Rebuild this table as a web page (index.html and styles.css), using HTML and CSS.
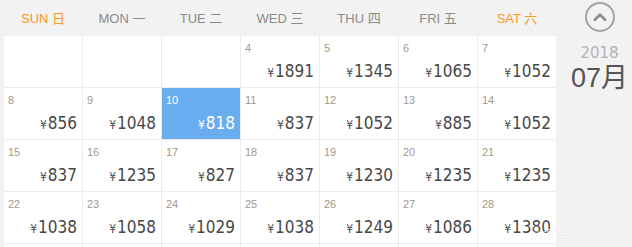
FILE: index.html
```html
<!DOCTYPE html>
<html lang="zh-CN">
<head>
<meta charset="utf-8">
<title>价格日历</title>
<link rel="stylesheet" href="styles.css">
</head>
<body>
<div class="page">
  <div class="calendar">
    <div class="weekdays">
      <div class="wd weekend">SUN 日</div>
      <div class="wd">MON 一</div>
      <div class="wd">TUE 二</div>
      <div class="wd">WED 三</div>
      <div class="wd">THU 四</div>
      <div class="wd">FRI 五</div>
      <div class="wd weekend">SAT 六</div>
    </div>
    <div class="days">
      <div class="day"></div>
      <div class="day"></div>
      <div class="day"></div>
      <div class="day"><span class="num">4</span><span class="price"><i>¥</i>1891</span></div>
      <div class="day"><span class="num">5</span><span class="price"><i>¥</i>1345</span></div>
      <div class="day"><span class="num">6</span><span class="price"><i>¥</i>1065</span></div>
      <div class="day"><span class="num">7</span><span class="price"><i>¥</i>1052</span></div>

      <div class="day"><span class="num">8</span><span class="price"><i>¥</i>856</span></div>
      <div class="day"><span class="num">9</span><span class="price"><i>¥</i>1048</span></div>
      <div class="day selected"><span class="num">10</span><span class="price"><i>¥</i>818</span></div>
      <div class="day"><span class="num">11</span><span class="price"><i>¥</i>837</span></div>
      <div class="day"><span class="num">12</span><span class="price"><i>¥</i>1052</span></div>
      <div class="day"><span class="num">13</span><span class="price"><i>¥</i>885</span></div>
      <div class="day"><span class="num">14</span><span class="price"><i>¥</i>1052</span></div>

      <div class="day"><span class="num">15</span><span class="price"><i>¥</i>837</span></div>
      <div class="day"><span class="num">16</span><span class="price"><i>¥</i>1235</span></div>
      <div class="day"><span class="num">17</span><span class="price"><i>¥</i>827</span></div>
      <div class="day"><span class="num">18</span><span class="price"><i>¥</i>837</span></div>
      <div class="day"><span class="num">19</span><span class="price"><i>¥</i>1230</span></div>
      <div class="day"><span class="num">20</span><span class="price"><i>¥</i>1235</span></div>
      <div class="day"><span class="num">21</span><span class="price"><i>¥</i>1235</span></div>

      <div class="day"><span class="num">22</span><span class="price"><i>¥</i>1038</span></div>
      <div class="day"><span class="num">23</span><span class="price"><i>¥</i>1058</span></div>
      <div class="day"><span class="num">24</span><span class="price"><i>¥</i>1029</span></div>
      <div class="day"><span class="num">25</span><span class="price"><i>¥</i>1038</span></div>
      <div class="day"><span class="num">26</span><span class="price"><i>¥</i>1249</span></div>
      <div class="day"><span class="num">27</span><span class="price"><i>¥</i>1086</span></div>
      <div class="day"><span class="num">28</span><span class="price"><i>¥</i>1380</span></div>

      <div class="day"></div>
      <div class="day"></div>
      <div class="day"></div>
      <div class="day"></div>
      <div class="day"></div>
      <div class="day"></div>
      <div class="day"></div>
    </div>
  </div>
  <div class="side">
    <svg class="up" width="30" height="30" viewBox="0 0 30 30" aria-label="上一月">
      <circle cx="15" cy="15" r="14" fill="none" stroke="#a3a3a3" stroke-width="2"/>
      <polyline points="9.8,17.8 15,12.8 20.2,17.8" fill="none" stroke="#8c8c8c" stroke-width="2.6" stroke-linecap="round" stroke-linejoin="round"/>
    </svg>
    <div class="year">2018</div>
    <div class="month">07月</div>
  </div>
</div>
<div class="watermark">头条号 / 染柳烟浓</div>
</body>
</html>
```
FILE: styles.css
```css
html, body {
  margin: 0;
  padding: 0;
  height: 247px;
  overflow: hidden;
  background: #f2f2f2;
}

body {
  position: relative;
  font-family: "Liberation Sans", "Noto Sans CJK SC", sans-serif;
}

.page {
  display: flex;
  padding-left: 4px;
}

.calendar {
  width: 552px;
  flex: none;
}

.weekdays {
  display: grid;
  grid-template-columns: repeat(7, 78px);
  column-gap: 1px;
  height: 36px;
}

.wd {
  text-align: center;
  font-size: 13px;
  line-height: 36px;
  padding-top: 1px;
  color: #8a8a8a;
  white-space: nowrap;
}

.wd.weekend {
  color: #f59a23;
}

.days {
  display: grid;
  grid-template-columns: repeat(7, 78px);
  grid-auto-rows: 51px;
  gap: 1px;
  background: #ececec;
}

.day {
  background: #fff;
  display: flex;
  flex-direction: column;
  padding: 5px 5px 4px 4px;
  box-sizing: border-box;
}

.num {
  font-size: 11px;
  line-height: 14px;
  color: #a0988f;
}

.price {
  margin-top: auto;
  text-align: right;
  font-family: "DejaVu Sans Condensed", "DejaVu Sans", sans-serif;
  font-size: 17px;
  line-height: 20px;
  color: #474747;
  white-space: nowrap;
}

.price i {
  font-style: normal;
  font-size: 12px;
  margin-right: 1px;
  color: #555;
}

.day.selected {
  background: #6aadef;
}

.day.selected .num,
.day.selected .price,
.day.selected .price i {
  color: #fff;
}

.side {
  flex: 1;
  display: flex;
  flex-direction: column;
  align-items: center;
  padding-left: 11px;
}

.up {
  display: block;
  margin-top: 2px;
}

.year {
  margin-top: 12px;
  font-family: "DejaVu Sans", sans-serif;
  font-size: 15px;
  line-height: 18px;
  color: #b3b3b3;
}

.month {
  margin-top: 1px;
  font-size: 27px;
  line-height: 30px;
  color: #555;
  white-space: nowrap;
}

.watermark {
  position: absolute;
  right: 7px;
  bottom: 4px;
  font-size: 12px;
  line-height: 16px;
  color: rgba(255, 255, 255, 0.92);
  text-shadow: 0 0 1px rgba(0, 0, 0, 0.12);
  white-space: nowrap;
}
```
